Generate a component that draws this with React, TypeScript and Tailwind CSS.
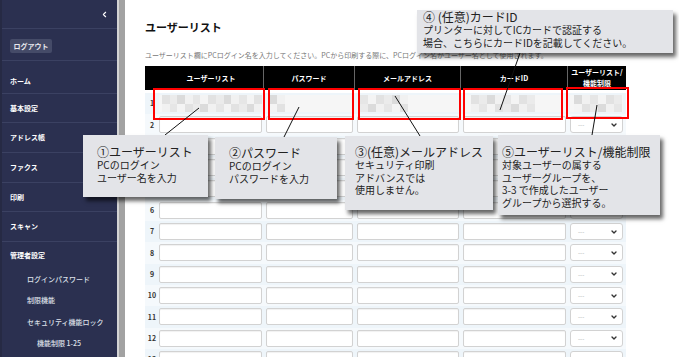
import { ChevronLeft, ChevronDown } from 'lucide-react';

const navItems = [
  { label: 'ホーム', cls: 'h-[33px] pt-[9px]' },
  { label: '基本設定', cls: 'h-[29px]' },
  { label: 'アドレス帳', cls: 'h-[30px]' },
  { label: 'ファクス', cls: 'h-[30px]' },
  { label: '印刷', cls: 'h-[29px]' },
  { label: 'スキャン', cls: 'h-[30px]' },
];

const subItems = [
  { label: 'ログインパスワード', cls: 'pl-[25px]' },
  { label: '制限機能', cls: 'pl-[25px]' },
  { label: 'セキュリティ機能ロック', cls: 'pl-[25px]' },
  { label: '機能制限 1-25', cls: 'pl-[35px]' },
];

const shades = ['bg-[#e2e2e2]', 'bg-[#ebebeb]', 'bg-[#dbdbdb]', 'bg-[#f1f1f1]', 'bg-[#e6e6e6]', 'bg-[#f4f4f4]'];

// blurred first-row values: number of mosaic blocks per cell
const mosaic = [13, 2, 6, 8, 6];

function Mosaic({ blocks, seed }: { blocks: number; seed: number }) {
  return (
    <div className="flex h-full flex-col">
      {[0, 1].map((r) => (
        <div key={r} className="flex h-1/2">
          {Array.from({ length: blocks }).map((_, i) => (
            <div key={i} className={`w-[8px] h-full ${shades[(i * 7 + r * 3 + seed) % shades.length]}`} />
          ))}
        </div>
      ))}
    </div>
  );
}

function Field() {
  return <div className="h-[17px] rounded-[2px] border border-[#d2d2d2] bg-white shadow-[inset_0_1px_1px_rgba(0,0,0,0.06)]" />;
}

function Select() {
  return (
    <div className="flex h-[17px] items-center justify-between rounded-[3px] border border-[#d2d2d2] bg-white pl-[7px] pr-[4px]">
      <span className="text-[6px] text-[#aaa]">---</span>
      <ChevronDown size={8} strokeWidth={4} className="text-[#333]" />
    </div>
  );
}

function Callout({ className, title, lines, pad }: { className: string; title: string; lines: string[]; pad: string }) {
  return (
    <div className={`absolute bg-[#e3e4e8] shadow-[3px_4px_4px_rgba(0,0,0,0.6)] text-[#222] ${pad} ${className}`}>
      <div className="text-[12px] leading-[14px] whitespace-nowrap">{title}</div>
      {lines.map((l) => (
        <div key={l} className="text-[10px] leading-[12.5px] whitespace-nowrap">
          {l}
        </div>
      ))}
    </div>
  );
}

export default function App() {
  const rows = Array.from({ length: 14 }, (_, i) => i + 1);

  return (
    <div className="relative flex h-[357px] w-[679px] overflow-hidden bg-white font-['Noto_Sans_CJK_JP','Noto_Sans',sans-serif]">
      {/* Sidebar */}
      <aside className="flex w-[117px] shrink-0 flex-col bg-[#2b3050] border-l-[2px] border-[#262a44] text-white">
        <div className="flex h-[29px] items-center justify-end border-b border-[#3b4162] pr-[8px]">
          <ChevronLeft size={9} strokeWidth={3} />
        </div>
        <div className="h-[32px] border-b border-[#3b4162] pl-[8px] pt-[10px]">
          <div className="flex h-[14px] w-[42px] items-center justify-center rounded-[2px] bg-[#454b68] text-[7px] font-bold text-[#e8e9ee]">
            ログアウト
          </div>
        </div>
        {navItems.map((n) => (
          <div key={n.label} className={`flex items-center border-b border-[#3b4162] pl-[8px] text-[7px] font-bold ${n.cls}`}>
            {n.label}
          </div>
        ))}
        <div className="flex h-[26px] items-center pl-[8px] text-[7px] font-bold">管理者設定</div>
        {subItems.map((s) => (
          <div key={s.label} className={`flex h-[21.5px] items-center text-[7px] font-medium text-[#dfe1ea] ${s.cls}`}>
            {s.label}
          </div>
        ))}
      </aside>
      <div className="w-[2px] shrink-0 bg-[#d4d4d4]" />
      <div className="w-[6px] shrink-0 bg-[#a2a2a2]" />

      {/* Content */}
      <main className="flex-1 pl-[20px] pt-[20px]">
        <h1 className="text-[11px] font-bold leading-[14px] text-[#111]">ユーザーリスト</h1>
        <p className="mt-[16px] whitespace-nowrap text-[7px] leading-[10px] text-[#777]">
          ユーザーリスト欄にPCログイン名を入力してください。PCから印刷する際に、PCログイン名がユーザー名として使用されます。
        </p>

        <div className="mt-[6px] w-[481px]">
          <div className="grid h-[24px] grid-cols-[14px_105px_91px_106px_107px_58px] bg-black text-[7px] font-bold text-white">
            <div />
            <div className="flex items-center justify-center border-r border-[#666]">ユーザーリスト</div>
            <div className="flex items-center justify-center border-r border-[#666]">パスワード</div>
            <div className="flex items-center justify-center border-r border-[#666]">メールアドレス</div>
            <div className="flex items-center justify-center border-r border-[#666]">カードID</div>
            <div className="flex flex-col items-center justify-center leading-[11px]">
              <span>ユーザーリスト/</span>
              <span>機能制限</span>
            </div>
          </div>

          <div className="mt-[3px]">
            {rows.map((n) => (
              <div
                key={n}
                className={`grid h-[21.33px] grid-cols-[14px_105px_91px_106px_107px_58px] items-center ${n % 2 ? 'bg-[#eef5fa]' : 'bg-[#f5f9fc]'}`}
              >
                <div className="text-center text-[7px] font-bold text-[#333]">{n}</div>
                {n === 1 ? (
                  mosaic.map((b, i) => (
                    <div key={i} className={i === 0 ? 'pr-[2px]' : i === 4 ? 'pl-[2px] pr-[3px]' : 'px-[2px]'}>
                      <div className={`h-[17px] overflow-hidden bg-[#f6f6f6] ${i === 3 ? 'pl-[8px]' : i === 4 ? 'pl-[4px]' : 'pl-[3px]'}`}>
                        <Mosaic blocks={b} seed={i * 2} />
                      </div>
                    </div>
                  ))
                ) : (
                  <>
                    <div className="pr-[2px]">
                      <Field />
                    </div>
                    <div className="px-[2px]">
                      <Field />
                    </div>
                    <div className="px-[2px]">
                      <Field />
                    </div>
                    <div className="px-[2px]">
                      <Field />
                    </div>
                    <div className="pl-[2px] pr-[3px]">
                      <Select />
                    </div>
                  </>
                )}
              </div>
            ))}
          </div>
        </div>
      </main>

      {/* Annotation: red frames */}
      <div className="absolute left-[153px] top-[88px] h-[32px] w-[112px] border-2 border-[#f00]" />
      <div className="absolute left-[268px] top-[88px] h-[32px] w-[86px] border-2 border-[#f00]" />
      <div className="absolute left-[358px] top-[88px] h-[32px] w-[103px] border-2 border-[#f00]" />
      <div className="absolute left-[463px] top-[88px] h-[32px] w-[100px] border-2 border-[#f00]" />
      <div className="absolute left-[566px] top-[87px] h-[32px] w-[63px] border-2 border-[#f00]" />

      {/* Annotation: leader lines */}
      <svg className="pointer-events-none absolute left-0 top-0" width="679" height="357">
        <g stroke="#111" strokeWidth="1">
          <line x1="199" y1="108" x2="165" y2="135" />
          <line x1="299" y1="107" x2="284" y2="137" />
          <line x1="395" y1="96" x2="420" y2="136" />
          <line x1="520" y1="53" x2="500" y2="110" />
          <line x1="597" y1="105" x2="592" y2="135" />
        </g>
      </svg>

      {/* Annotation: callouts */}
      <Callout
        className="left-[83px] top-[135px] h-[62px] w-[125px]"
        pad="pl-[14px] pt-[10px]"
        title="①ユーザーリスト"
        lines={['PCのログイン', 'ユーザー名を入力']}
      />
      <Callout
        className="left-[215px] top-[137px] h-[62px] w-[122px]"
        pad="pl-[14px] pt-[9px]"
        title="②パスワード"
        lines={['PCのログイン', 'パスワードを入力']}
      />
      <Callout
        className="left-[345px] top-[136px] h-[74px] w-[148px]"
        pad="pl-[10px] pt-[9px]"
        title="③(任意)メールアドレス"
        lines={['セキュリティ印刷', 'アドバンスでは', '使用しません。']}
      />
      <Callout
        className="left-[417px] top-[10px] h-[43px] w-[256px]"
        pad="pl-[6px] pt-0"
        title="④ (任意)カードID"
        lines={['プリンターに対してICカードで認証する', '場合、こちらにカードIDを記載してください。']}
      />
      <Callout
        className="left-[498px] top-[135px] h-[80px] w-[162px]"
        pad="pl-[4px] pt-[10px]"
        title="⑤ユーザーリスト/機能制限"
        lines={['対象ユーザーの属する', 'ユーザーグループを、', '3-3 で作成したユーザー', 'グループから選択する。']}
      />
    </div>
  );
}
